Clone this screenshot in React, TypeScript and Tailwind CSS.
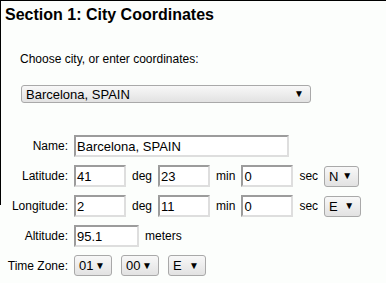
import type { ReactNode } from 'react';

const font = { fontFamily: '"Liberation Sans", Arial, sans-serif' };

// ─── Form bits ────────────────────────────────────────────────────────────────

function TextBox({ value, w }: { value: string; w: string }) {
  return (
    <div
      className={`${w} h-[22px] flex items-center pl-[1px] text-[13px] leading-none bg-white border-2 border-t-[#9c9c9c] border-l-[#9c9c9c] border-b-[#dedede] border-r-[#dedede]`}
    >
      {value}
    </div>
  );
}

function Drop({ value, w, h = 'h-[21px]' }: { value: string; w: string; h?: string }) {
  return (
    <div
      className={`${w} ${h} flex items-center justify-between pl-[4px] pr-[6px] text-[13px] leading-none rounded-[3px] border border-[#a9a9a9] bg-gradient-to-b from-[#f8f8f8] to-[#e2e2e2]`}
    >
      <span>{value}</span>
      <span className="text-[10px]">▼</span>
    </div>
  );
}

function Row({ label, children }: { label: string; children: ReactNode }) {
  return (
    <>
      <div className="text-right text-[12px] self-center">{label}</div>
      <div className="flex items-center">{children}</div>
    </>
  );
}

const Unit = ({ t }: { t: string }) => <span className="text-[12px] px-[6px]">{t}</span>;

// ─── App ──────────────────────────────────────────────────────────────────────

export default function App() {
  return (
    <div className="w-[386px] h-[283px] overflow-hidden bg-[#fcfefc] text-black" style={font}>
      <div className="h-[205px] border-t border-l border-black">
        <h2 className="text-[16px] font-bold leading-none pl-[4px] pt-[6px]">Section 1: City Coordinates</h2>

        <p className="text-[12px] leading-[14px] pl-[19px] mt-[29px]">Choose city, or enter coordinates:</p>

        <div className="pl-[20px] mt-[19px]">
          <Drop value="Barcelona, SPAIN" w="w-[290px]" h="h-[18px]" />
        </div>

        <div className="grid grid-cols-[67px_auto] gap-x-[6px] gap-y-[8px] mt-[32px]">
          <Row label="Name:">
            <TextBox value="Barcelona, SPAIN" w="w-[215px]" />
          </Row>
          <Row label="Latitude:">
            <TextBox value="41" w="w-[52px]" />
            <Unit t="deg" />
            <TextBox value="23" w="w-[52px]" />
            <Unit t="min" />
            <TextBox value="0" w="w-[52px]" />
            <Unit t="sec" />
            <Drop value="N" w="w-[35px]" />
          </Row>
          <Row label="Longitude:">
            <TextBox value="2" w="w-[52px]" />
            <Unit t="deg" />
            <TextBox value="11" w="w-[52px]" />
            <Unit t="min" />
            <TextBox value="0" w="w-[52px]" />
            <Unit t="sec" />
            <Drop value="E" w="w-[37px]" />
          </Row>
          <Row label="Altitude:">
            <TextBox value="95.1" w="w-[65px]" />
            <Unit t="meters" />
          </Row>
          <Row label="Time Zone:">
            <div className="flex items-center gap-[9px]">
              <Drop value="01" w="w-[38px]" />
              <Drop value="00" w="w-[38px]" />
              <Drop value="E" w="w-[38px]" />
            </div>
          </Row>
        </div>
      </div>
    </div>
  );
}
